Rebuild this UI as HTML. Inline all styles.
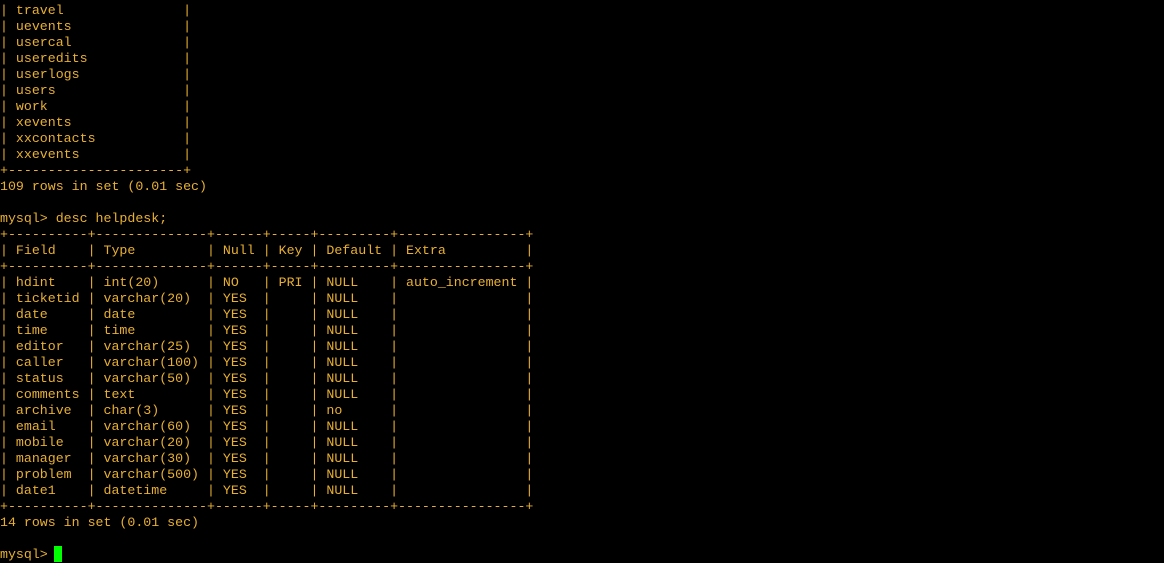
<!DOCTYPE html>
<html><head><meta charset="utf-8"><style>
html,body{margin:0;padding:0;background:#000;width:1164px;height:562px;overflow:hidden}
pre{margin:0;position:absolute;left:0px;top:3px;font-family:"Liberation Mono",monospace;font-size:13.28px;line-height:16px;color:#e8b030;white-space:pre}
.cur{position:absolute;left:54px;top:546px;width:8px;height:16px;background:#00ff00}
</style></head><body>
<pre>| travel               |
| uevents              |
| usercal              |
| useredits            |
| userlogs             |
| users                |
| work                 |
| xevents              |
| xxcontacts           |
| xxevents             |
+----------------------+
109 rows in set (0.01 sec)

mysql&gt; desc helpdesk;
+----------+--------------+------+-----+---------+----------------+
| Field    | Type         | Null | Key | Default | Extra          |
+----------+--------------+------+-----+---------+----------------+
| hdint    | int(20)      | NO   | PRI | NULL    | auto_increment |
| ticketid | varchar(20)  | YES  |     | NULL    |                |
| date     | date         | YES  |     | NULL    |                |
| time     | time         | YES  |     | NULL    |                |
| editor   | varchar(25)  | YES  |     | NULL    |                |
| caller   | varchar(100) | YES  |     | NULL    |                |
| status   | varchar(50)  | YES  |     | NULL    |                |
| comments | text         | YES  |     | NULL    |                |
| archive  | char(3)      | YES  |     | no      |                |
| email    | varchar(60)  | YES  |     | NULL    |                |
| mobile   | varchar(20)  | YES  |     | NULL    |                |
| manager  | varchar(30)  | YES  |     | NULL    |                |
| problem  | varchar(500) | YES  |     | NULL    |                |
| date1    | datetime     | YES  |     | NULL    |                |
+----------+--------------+------+-----+---------+----------------+
14 rows in set (0.01 sec)

mysql&gt; </pre>
<div class="cur"></div>
</body></html>
